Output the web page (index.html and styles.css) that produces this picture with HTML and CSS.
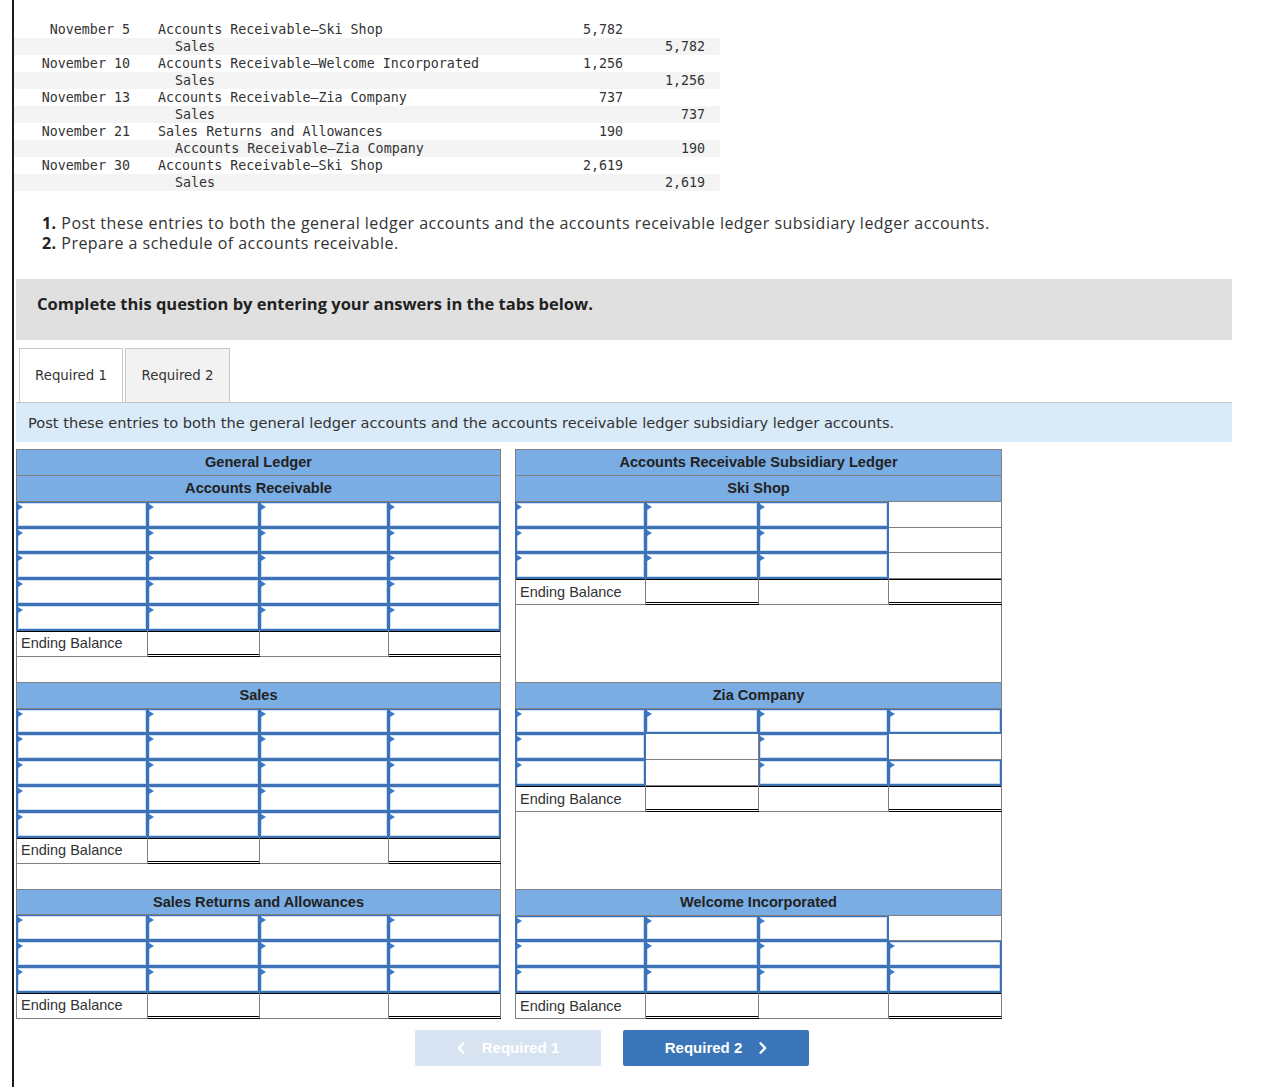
FILE: index.html
```html
<!DOCTYPE html>
<html lang="en">
<head>
<meta charset="utf-8">
<title>Accounts Receivable Ledger</title>
<link rel="stylesheet" href="styles.css">
</head>
<body>
<div class="page">
  <div class="journal">
    <div class="jrow"><span class="jd">November 5</span><span class="ja">Accounts Receivable–Ski Shop</span><span class="jn">5,782</span><span class="jn"></span></div>
    <div class="jrow alt"><span class="jd"></span><span class="ja ind">Sales</span><span class="jn"></span><span class="jn">5,782</span></div>
    <div class="jrow"><span class="jd">November 10</span><span class="ja">Accounts Receivable–Welcome Incorporated</span><span class="jn">1,256</span><span class="jn"></span></div>
    <div class="jrow alt"><span class="jd"></span><span class="ja ind">Sales</span><span class="jn"></span><span class="jn">1,256</span></div>
    <div class="jrow"><span class="jd">November 13</span><span class="ja">Accounts Receivable–Zia Company</span><span class="jn">737</span><span class="jn"></span></div>
    <div class="jrow alt"><span class="jd"></span><span class="ja ind">Sales</span><span class="jn"></span><span class="jn">737</span></div>
    <div class="jrow"><span class="jd">November 21</span><span class="ja">Sales Returns and Allowances</span><span class="jn">190</span><span class="jn"></span></div>
    <div class="jrow alt"><span class="jd"></span><span class="ja ind">Accounts Receivable–Zia Company</span><span class="jn"></span><span class="jn">190</span></div>
    <div class="jrow"><span class="jd">November 30</span><span class="ja">Accounts Receivable–Ski Shop</span><span class="jn">2,619</span><span class="jn"></span></div>
    <div class="jrow alt"><span class="jd"></span><span class="ja ind">Sales</span><span class="jn"></span><span class="jn">2,619</span></div>
  </div>

  <div class="reqs">
    <div><b>1.</b> Post these entries to both the general ledger accounts and the accounts receivable ledger subsidiary ledger accounts.</div>
    <div><b>2.</b> Prepare a schedule of accounts receivable.</div>
  </div>

  <div class="banner">Complete this question by entering your answers in the tabs below.</div>

  <div class="tabs">
    <div class="tab active">Required 1</div>
    <div class="tab">Required 2</div>
  </div>

  <div class="prompt">Post these entries to both the general ledger accounts and the accounts receivable ledger subsidiary ledger accounts.</div>

  <div class="ledgers">
    <table class="ledger left">
      <colgroup><col class="c1"><col class="c2"><col class="c3"><col class="c4"></colgroup>
      <tr><th colspan="4">General Ledger</th></tr>
      <tr><th colspan="4">Accounts Receivable</th></tr>
      <tr><td class="in"></td><td class="in"></td><td class="in"></td><td class="in"></td></tr>
      <tr><td class="in"></td><td class="in"></td><td class="in"></td><td class="in"></td></tr>
      <tr><td class="in"></td><td class="in"></td><td class="in"></td><td class="in"></td></tr>
      <tr><td class="in"></td><td class="in"></td><td class="in"></td><td class="in"></td></tr>
      <tr><td class="in"></td><td class="in"></td><td class="in"></td><td class="in"></td></tr>
      <tr class="eb"><td class="lbl">Ending Balance</td><td class="dbl"></td><td></td><td class="dbl"></td></tr>
      <tr><td colspan="4"></td></tr>
      <tr><th colspan="4">Sales</th></tr>
      <tr><td class="in"></td><td class="in"></td><td class="in"></td><td class="in"></td></tr>
      <tr><td class="in"></td><td class="in"></td><td class="in"></td><td class="in"></td></tr>
      <tr><td class="in"></td><td class="in"></td><td class="in"></td><td class="in"></td></tr>
      <tr><td class="in"></td><td class="in"></td><td class="in"></td><td class="in"></td></tr>
      <tr><td class="in"></td><td class="in"></td><td class="in"></td><td class="in"></td></tr>
      <tr class="eb"><td class="lbl">Ending Balance</td><td class="dbl"></td><td></td><td class="dbl"></td></tr>
      <tr><td colspan="4"></td></tr>
      <tr><th colspan="4">Sales Returns and Allowances</th></tr>
      <tr><td class="in"></td><td class="in"></td><td class="in"></td><td class="in"></td></tr>
      <tr><td class="in"></td><td class="in"></td><td class="in"></td><td class="in"></td></tr>
      <tr><td class="in"></td><td class="in"></td><td class="in"></td><td class="in"></td></tr>
      <tr class="eb"><td class="lbl">Ending Balance</td><td class="dbl"></td><td></td><td class="dbl"></td></tr>
    </table>

    <table class="ledger right">
      <colgroup><col class="r1"><col class="r2"><col class="r3"><col class="r4"></colgroup>
      <tr><th colspan="4">Accounts Receivable Subsidiary Ledger</th></tr>
      <tr><th colspan="4">Ski Shop</th></tr>
      <tr><td class="in"></td><td class="in"></td><td class="in"></td><td></td></tr>
      <tr><td class="in"></td><td class="in"></td><td class="in"></td><td></td></tr>
      <tr><td class="in"></td><td class="in"></td><td class="in"></td><td></td></tr>
      <tr class="eb"><td class="lbl">Ending Balance</td><td class="dbl"></td><td></td><td class="dbl"></td></tr>
      <tr><td colspan="4" rowspan="3" class="blank3"></td></tr>
      <tr></tr>
      <tr></tr>
      <tr><th colspan="4">Zia Company</th></tr>
      <tr><td class="in"></td><td class="in"></td><td class="in"></td><td class="in"></td></tr>
      <tr><td class="in"></td><td></td><td class="in"></td><td></td></tr>
      <tr><td class="in"></td><td></td><td class="in"></td><td class="in"></td></tr>
      <tr class="eb"><td class="lbl">Ending Balance</td><td class="dbl"></td><td></td><td class="dbl"></td></tr>
      <tr><td colspan="4" rowspan="3" class="blank3"></td></tr>
      <tr></tr>
      <tr></tr>
      <tr><th colspan="4">Welcome Incorporated</th></tr>
      <tr><td class="in"></td><td class="in"></td><td class="in"></td><td></td></tr>
      <tr><td class="in"></td><td class="in"></td><td class="in"></td><td class="in"></td></tr>
      <tr><td class="in"></td><td class="in"></td><td class="in"></td><td class="in"></td></tr>
      <tr class="eb"><td class="lbl">Ending Balance</td><td class="dbl"></td><td></td><td class="dbl"></td></tr>
    </table>
  </div>

  <div class="nav">
    <button class="btn prev" type="button" disabled>
      <svg class="chev" width="8" height="12" viewBox="0 0 8 12"><path d="M6.5 1.2 L1.8 6 L6.5 10.8"/></svg>
      <span>Required 1</span>
    </button>
    <button class="btn next" type="button">
      <span>Required 2</span>
      <svg class="chev" width="8" height="12" viewBox="0 0 8 12"><path d="M1.5 1.2 L6.2 6 L1.5 10.8"/></svg>
    </button>
  </div>
</div>
</body>
</html>
```

FILE: styles.css
```css
* { box-sizing: border-box; }

body {
  margin: 0;
  background: #fff;
  color: #333;
}

.page {
  margin-left: 12px;
  border-left: 2px solid #1e1e1e;
  min-height: 1087px;
  padding-top: 21px;
}

/* Journal entries */
.journal {
  font-family: "DejaVu Sans Mono", "Liberation Mono", monospace;
  font-size: 13.33px;
  color: #333;
}

.jrow {
  display: grid;
  grid-template-columns: 116px 413px 80px 82px;
  width: 706px;
  height: 17px;
  line-height: 17px;
  white-space: pre;
}

.jrow.alt { background: #f4f4f4; }

.jd { text-align: right; }
.ja { padding-left: 28px; }
.ja.ind { padding-left: 45px; }
.jn { text-align: right; }

/* Requirements */
.reqs {
  margin: 22px 0 0 28px;
  font-family: "Open Sans", "Liberation Sans", sans-serif;
  font-size: 16px;
  line-height: 20px;
  letter-spacing: 0.47px;
  color: #333;
}

.reqs b { font-weight: 700; color: #222; }

/* Gray banner */
.banner {
  margin: 26px 0 0 2px;
  width: 1216px;
  height: 61px;
  background: #e0e0e0;
  padding: 14px 0 0 21px;
  line-height: 22px;
  font-family: "Open Sans", "DejaVu Sans", sans-serif;
  font-weight: 700;
  font-size: 16.5px;
  color: #222;
}

/* Tabs */
.tabs {
  display: flex;
  gap: 2px;
  margin-top: 8px;
  padding-left: 5px;
}

.tab {
  width: 104px;
  height: 54px;
  border: 1px solid #c8c8c8;
  border-bottom: none;
  background: #f2f2f2;
  display: flex;
  align-items: center;
  justify-content: center;
  font-family: "DejaVu Sans", "Open Sans", sans-serif;
  font-size: 13.3px;
  color: #333;
}

.tab + .tab { width: 105px; }
.tab.active { background: #fff; }

.prompt {
  margin-left: 2px;
  width: 1216px;
  height: 40px;
  background: #d9eaf8;
  border-top: 1px solid #c4c4c4;
  padding-left: 12px;
  line-height: 40px;
  font-family: "DejaVu Sans", "Open Sans", sans-serif;
  font-size: 14.6px;
  color: #333;
}

/* Ledgers */
.ledgers {
  display: flex;
  align-items: flex-start;
  gap: 14px;
  margin: 7px 0 0 2px;
}

.ledger {
  border-collapse: collapse;
  table-layout: fixed;
  font-family: "Liberation Sans", Arial, sans-serif;
}

.ledger.left { width: 484px; }
.ledger.right { width: 486px; }

.c1 { width: 131px; }
.c2 { width: 112px; }
.c3 { width: 129px; }
.c4 { width: 112px; }
.r1 { width: 130px; }
.r2 { width: 113px; }
.r3 { width: 130px; }
.r4 { width: 113px; }

.ledger tr { height: 25.86px; }

.ledger th,
.ledger td {
  border: 1px solid #808080;
  padding: 0;
}

.ledger th {
  background: #79ade3;
  font-weight: 700;
  font-size: 14.6px;
  color: #222;
  text-align: center;
}

.ledger td.in {
  position: relative;
  border-color: #3e72b5;
  box-shadow: inset 0 0 0 1px #3e72b5, inset 0 0 0 2px #cadef5;
}

.ledger td.in::before {
  content: "";
  position: absolute;
  left: 1px;
  top: 2px;
  border-left: 5px solid #3a78cc;
  border-top: 3px solid transparent;
  border-bottom: 3px solid transparent;
}

.ledger tr.eb td { box-shadow: inset 0 1px 0 #000; }

.ledger td.lbl {
  padding-left: 4px;
  font-size: 14.5px;
  color: #333;
}

.ledger tr.eb td.dbl {
  border-bottom-color: #000;
  box-shadow: inset 0 1px 0 #000, inset 0 -1px 0 #fff, inset 0 -2px 0 #000;
}

.ledger td.blank3 { height: 77.6px; }

/* Navigation buttons */
.nav {
  display: flex;
  gap: 22px;
  margin-top: 11px;
  padding-left: 401px;
}

.btn {
  width: 186px;
  height: 36px;
  border: none;
  border-radius: 2px;
  display: flex;
  align-items: center;
  justify-content: center;
  gap: 17px;
  font-family: "Liberation Sans", Arial, sans-serif;
  font-weight: 700;
  font-size: 15px;
  color: #fff;
  padding: 0;
}

.btn.prev { background: #d7e3f1; }
.btn.next { background: #3a75b9; }

.chev path {
  fill: none;
  stroke: #fff;
  stroke-width: 2.3;
  stroke-linecap: round;
  stroke-linejoin: round;
}
```
